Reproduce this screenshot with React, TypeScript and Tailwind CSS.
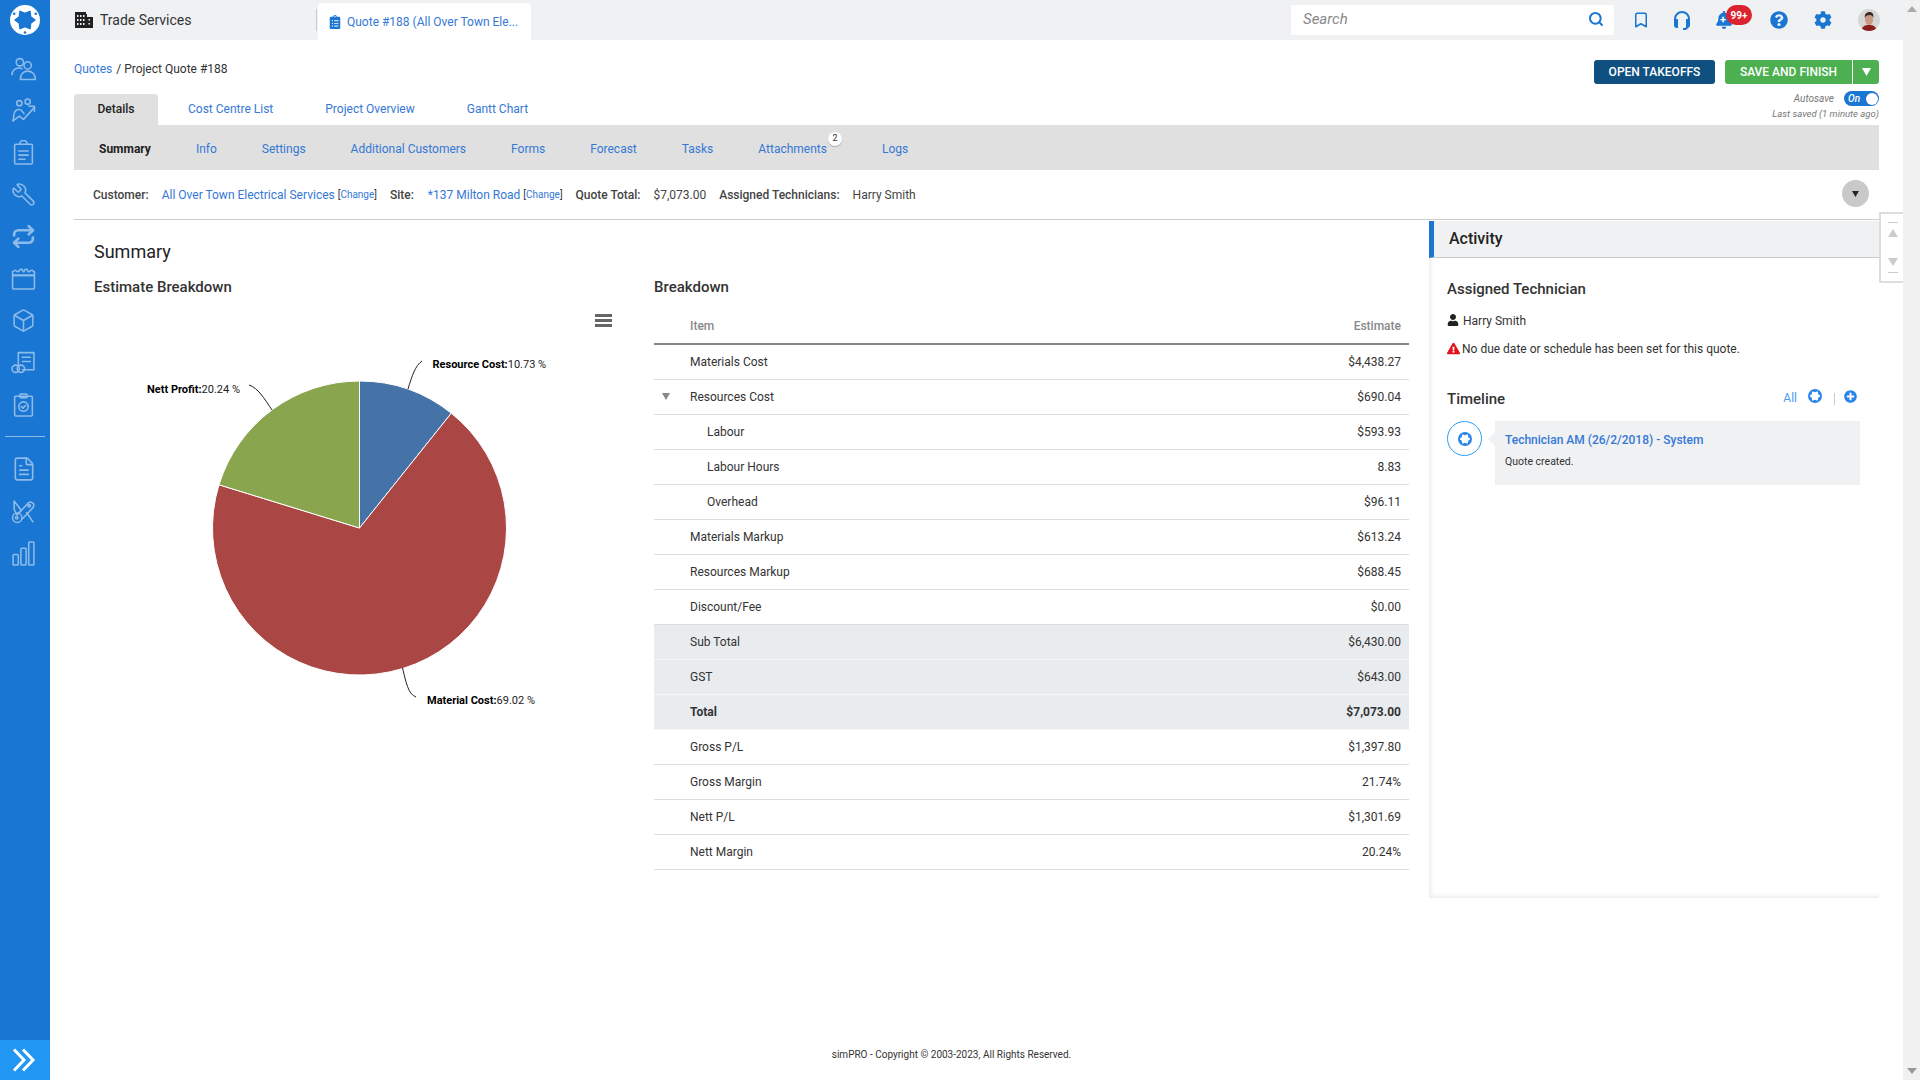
import { Bookmark, Box, FileText, Repeat, Search, Wrench } from 'lucide-react';
import { FaBell, FaClipboardList, FaCog, FaExclamationTriangle, FaPlusCircle, FaQuestionCircle, FaUser } from 'react-icons/fa';

const iconStroke = '#8dbbea';
const starPoints = '20,6.340 20.630,11.750 25,15 20.630,18.250 20,23.660 15,21.500 10,23.660 9.370,18.250 5,15 9.370,11.750 10,6.340 15,8.500';

function SideSvg({ children }: { children: React.ReactNode }) {
  return (
    <svg width="25" height="25" viewBox="0 0 24 24" fill="none" stroke={iconStroke} strokeWidth="1.5" strokeLinecap="round" strokeLinejoin="round">
      {children}
    </svg>
  );
}

function Burst({ size, color }: { size: number; color: string }) {
  return (
    <svg width={size} height={size} viewBox="4 4 22 22">
      <polygon points={starPoints} fill={color} stroke={color} strokeWidth="3" strokeLinejoin="round" />
    </svg>
  );
}

function Logo() {
  return (
    <svg width="30" height="30" viewBox="0 0 30 30">
      <circle cx="15" cy="15" r="15" fill="#fff" />
      <polygon points={starPoints} fill="#1976d2" stroke="#1976d2" strokeWidth="1.500" strokeLinejoin="round" />
      <circle cx="25.800" cy="8.750" r="1.300" fill="#1976d2" />
      <circle cx="4.200" cy="8.750" r="1.300" fill="#1976d2" />
      <circle cx="15" cy="27.500" r="1.300" fill="#1976d2" />
    </svg>
  );
}

const sideIcons = [
  <SideSvg key="users"><circle cx="8.500" cy="6" r="3.500" /><circle cx="16" cy="9" r="3.500" /><path d="M1 18c0-4 3-6.500 6.500-6.500 1 0 2 .2 3 .6" /><path d="M9 22.500c0-5 3-8 7-8s7.500 3 7.500 8z" /></SideSvg>,
  <SideSvg key="leads"><circle cx="8" cy="5" r="2.500" /><circle cx="16" cy="3.500" r="2.500" /><path d="M2 22l1-7c.5-2 2-4 4.500-4 2 0 3 1 3.500 2l1.500 2" /><path d="M2 22l6-4.500 4 3L22.500 9" /><path d="M17 8h5.500v5" /></SideSvg>,
  <SideSvg key="quotes"><rect x="3.500" y="4" width="17" height="19" rx="1" /><path d="M8.500 4V3.500a3.500 3 0 0 1 7 0V4" /><path d="M7.500 10.500h9M7.500 14.500h9M7.500 18.500h6" /></SideSvg>,
  <Wrench key="wrench" size={25} color={iconStroke} strokeWidth={1.5} className="-scale-x-100" />,
  <Repeat key="repeat" size={25} color={iconStroke} strokeWidth={2.6} />,
  <SideSvg key="calendar"><path d="M1.500 9V5.500c1 0 1.500-1.500 2.500-1.500s1.500 1.500 2.500 1.500S8.500 3 10 3s1 2.500 2 2.500S13 3 14.500 3s1.500 2.500 2.500 2.500S18.500 4 20 4s1 1.500 2.500 1.500V9z" /><rect x="1.500" y="9" width="21" height="13" rx="1" /></SideSvg>,
  <Box key="box" size={25} color={iconStroke} strokeWidth={1.5} />,
  <SideSvg key="coins"><path d="M7 14V2.500h15V19H11" /><path d="M11 7h7.500M11 11h7.500" /><circle cx="4.500" cy="18" r="3.500" /><circle cx="9.500" cy="18" r="3.500" /></SideSvg>,
  <SideSvg key="check"><rect x="3.500" y="4" width="17" height="19" rx="1" /><rect x="8.500" y="2" width="7" height="3.500" rx="1" /><circle cx="12" cy="14" r="4.500" /><path d="M10 14l1.500 1.500 2.500-2.500" /></SideSvg>,
];

const sideIconsLower = [
  <FileText key="file" size={26} color={iconStroke} strokeWidth={1.5} />,
  <SideSvg key="tools"><path d="M3 2l7 9-4.500 4L3 10z" /><circle cx="6" cy="18" r="4.500" /><path d="M21.500 4.500c-1-1.500-3-2-4.500-1L6 15" /><path d="M21.500 4.500c.8 1.500.3 3-1 4.500L11 19" /><circle cx="17.500" cy="6.500" r="1.200" /><path d="M15 13l6 9" /><circle cx="5.500" cy="18" r="1.200" /></SideSvg>,
  <SideSvg key="bars"><rect x="2" y="13" width="5" height="10" rx=".8" /><rect x="9.500" y="7" width="5" height="16" rx=".8" /><rect x="17" y="1" width="5" height="22" rx=".8" /></SideSvg>,
];

const subTabs = ['Info', 'Settings', 'Additional Customers', 'Forms', 'Forecast', 'Tasks', 'Attachments', 'Logs'];

type Row = { item: string; value: string; indent?: boolean; toggle?: boolean; shade?: boolean; bold?: boolean };

const rows: Row[] = [
  { item: 'Materials Cost', value: '$4,438.27' },
  { item: 'Resources Cost', value: '$690.04', toggle: true },
  { item: 'Labour', value: '$593.93', indent: true },
  { item: 'Labour Hours', value: '8.83', indent: true },
  { item: 'Overhead', value: '$96.11', indent: true },
  { item: 'Materials Markup', value: '$613.24' },
  { item: 'Resources Markup', value: '$688.45' },
  { item: 'Discount/Fee', value: '$0.00' },
  { item: 'Sub Total', value: '$6,430.00', shade: true },
  { item: 'GST', value: '$643.00', shade: true },
  { item: 'Total', value: '$7,073.00', shade: true, bold: true },
  { item: 'Gross P/L', value: '$1,397.80' },
  { item: 'Gross Margin', value: '21.74%' },
  { item: 'Nett P/L', value: '$1,301.69' },
  { item: 'Nett Margin', value: '20.24%' },
];

function Sidebar() {
  return (
    <aside className="flex h-[1080px] w-[50px] shrink-0 flex-col items-center bg-[#1976d2]">
      <div className="mt-[5px]"><Logo /></div>
      <div className="mt-[21px] flex flex-col items-center gap-[17px] pr-[3px]">{sideIcons}</div>
      <div className="mt-[19px] h-px w-[40px] bg-[#8dbbea]" />
      <div className="mt-[19px] flex flex-col items-center gap-[17px] pr-[3px]">{sideIconsLower}</div>
      <div className="mt-auto flex h-[40px] w-full items-center justify-center bg-[#2196f3]">
        <svg width="24" height="24" viewBox="0 0 24 24" fill="none" stroke="#fff" strokeWidth="3" className="mr-[2px]">
          <path d="M2 1.500L12 12 2 22.500M11 1.500L21 12 11 22.500" />
        </svg>
      </div>
    </aside>
  );
}

function TopBar() {
  return (
    <header className="flex h-[40px] items-center bg-[#f0f1f3]">
      <div className="flex h-full w-[268px] shrink-0 items-center pl-[25px]">
        <svg width="18" height="16" viewBox="0 0 18 16" fill="#222">
          <path d="M0 0h11v2h1v14H0z" />
          <path d="M12 5h6v11h-6z" />
          <path d="M2 3h1.500v2H2zM5 3h1.500v2H5zM8 3h1.500v2H8zM2 7h1.500v2H2zM5 7h1.500v2H5zM8 7h1.500v2H8zM2 11h1.500v2H2zM5 11h1.500v2H5zM8 11h1.500v2H8zM13.500 7H15v1.500h-1.500zM13.500 11H15v1.500h-1.500z" fill="#f0f1f3" />
        </svg>
        <span className="ml-[7px] text-[14px] text-[#333]">Trade Services</span>
        <span className="ml-auto mr-[1px] h-[22px] w-px bg-[#ccc]" />
      </div>
      <div className="flex h-[37px] w-[213px] shrink-0 items-center self-end rounded-t-[3px] bg-white pl-[10px]">
        <FaClipboardList size={14} color="#1976d2" />
        <span className="ml-[5px] text-[12px] text-[#3578d6]">Quote #188 (All Over Town Ele...</span>
      </div>
      <div className="ml-auto flex h-[30px] w-[323px] shrink-0 items-center justify-between rounded-[2px] bg-white pl-[12px] pr-[10px]">
        <span className="mb-[1px] text-[15px] italic text-[#888]">Search</span>
        <Search size={16} color="#1976d2" strokeWidth={3} className="mb-[2px]" />
      </div>
      <div className="flex w-[289px] shrink-0 items-center">
        <Bookmark size={18} color="#1976d2" strokeWidth={2} className="ml-[18px]" />
        <svg width="18" height="20" viewBox="0 0 18 20" fill="none" stroke="#1976d2" strokeWidth="2" className="ml-[23px]">
          <path d="M2 13V9a7 7 0 0 1 14 0v4" />
          <path d="M2 10v5c0 1 .5 2 2 2V10zM16 10v5c0 1-.5 2-2 2V10z" fill="#1976d2" />
          <path d="M14 17c0 1.500-1 2-2.500 2H10" />
        </svg>
        <div className="relative ml-[24px] h-[18px] w-[18px]">
          <FaBell size={18} color="#1976d2" />
          <span className="absolute left-[5px] top-[4px] text-[11px] font-bold leading-[10px] text-white">+</span>
          <span className="absolute -top-[6px] left-[11px] flex h-[20px] w-[26px] items-center justify-center rounded-full bg-[#d9232e] text-[10px] font-bold text-white">99+</span>
        </div>
        <FaQuestionCircle size={18} color="#1976d2" className="ml-[37px]" />
        <FaCog size={18} color="#1976d2" className="ml-[26px]" />
        <svg width="22" height="22" viewBox="0 0 22 22" className="ml-[26px] rounded-full">
          <rect width="22" height="22" fill="#d6d6d6" />
          <path d="M3 22c1-5 4-6 8-6s7 1 8 6z" fill="#8c1f1c" />
          <ellipse cx="11" cy="10.500" rx="4" ry="5.500" fill="#c99a82" />
          <path d="M6.800 9c-.5-4 2-6 4.700-6s4.500 2 3.700 6c-.5-2-1.500-3-3.700-3S7.500 7 6.800 9z" fill="#3a2a22" />
        </svg>
      </div>
    </header>
  );
}

function ActionsRow() {
  return (
    <div className="flex justify-between">
      <div className="pt-[21px]">
        <div className="flex h-[16px] items-center text-[12px] text-[#333]">
          <span className="text-[#3578d6]">Quotes</span>
          <span className="ml-[4px]">/ Project Quote #188</span>
        </div>
        <div className="mt-[17px] flex h-[31px] items-center text-[12px] text-[#3578d6]">
          <div className="flex h-full w-[84px] items-center justify-center rounded-t-[3px] bg-[#e0e0e0] pb-[1px] font-medium text-[#222]">Details</div>
          <span className="ml-[30px] pb-[1px]">Cost Centre List</span>
          <span className="ml-[52px] pb-[1px]">Project Overview</span>
          <span className="ml-[52px] pb-[1px]">Gantt Chart</span>
        </div>
      </div>
      <div className="flex flex-col items-end pt-[20px]">
        <div className="flex h-[24px] text-[12px] font-medium text-white">
          <div className="flex w-[121px] items-center justify-center rounded-[3px] bg-[#0f5080]">OPEN TAKEOFFS</div>
          <div className="ml-[10px] flex w-[127px] items-center justify-center rounded-l-[3px] bg-[#4caf50]">SAVE AND FINISH</div>
          <div className="ml-px flex w-[26px] items-center justify-center rounded-r-[3px] bg-[#4caf50]">
            <svg width="9" height="8" viewBox="0 0 9 8" fill="#fff"><path d="M0 0h9L4.500 8z" /></svg>
          </div>
        </div>
        <div className="mt-[7px] flex h-[15px] items-center">
          <span className="text-[10px] italic text-[#777]">Autosave</span>
          <div className="ml-[10px] flex h-[15px] w-[35px] items-center justify-between rounded-full bg-[#1976d2] pl-[4px] pr-[1px]">
            <span className="text-[10px] font-medium italic text-white">On</span>
            <span className="h-[12px] w-[12px] rounded-full bg-white" />
          </div>
        </div>
        <span className="mt-[2px] text-[9.500px] leading-[12px] italic text-[#777]">Last saved (1 minute ago)</span>
      </div>
    </div>
  );
}

function SubTabs() {
  return (
    <div className="flex h-[45px] items-center gap-[45px] bg-[#e0e0e0] pl-[25px] pt-[3px] text-[12px] text-[#3578d6]">
      <span className="font-bold text-[#222]">Summary</span>
      {subTabs.map((tab) => (
        <span key={tab} className={`relative ${tab === 'Logs' ? 'ml-[10px]' : ''}`}>
          {tab}
          {tab === 'Attachments' && (
            <span className="absolute -right-[15px] -top-[8px] flex h-[14px] w-[14px] items-center justify-center rounded-full bg-white text-[9px] text-[#333] shadow-[0_1px_1px_rgba(0,0,0,0.25)]">2</span>
          )}
        </span>
      ))}
    </div>
  );
}

function CustomerRow() {
  const change = <span className="ml-[3px] text-[10px] text-[#333]">[<span className="text-[#3578d6]">Change</span>]</span>;
  return (
    <div className="flex h-[50px] items-center border-b border-[#ccc] pl-[19px] pr-[10px] text-[12px] text-[#444]">
      <span className="font-medium">Customer:</span>
      <span className="ml-[13px] text-[#3578d6]">All Over Town Electrical Services</span>
      {change}
      <span className="ml-[13px] font-medium">Site:</span>
      <span className="ml-[14px] text-[#3578d6]">*137 Milton Road</span>
      {change}
      <span className="ml-[13px] font-medium">Quote Total:</span>
      <span className="ml-[13px]">$7,073.00</span>
      <span className="ml-[13px] font-medium">Assigned Technicians:</span>
      <span className="ml-[13px]">Harry Smith</span>
      <div className="mb-[2px] ml-auto flex h-[27px] w-[27px] items-center justify-center rounded-full bg-[#c9c9c9]">
        <svg width="7" height="6" viewBox="0 0 8 7" fill="#222"><path d="M0 0h8L4 7z" /></svg>
      </div>
    </div>
  );
}

function PieChart() {
  return (
    <svg width="560" height="420" viewBox="0 0 560 420" className="mt-[3px] block">
      <path d="M265.500 228V81A147 147 0 0 1 357.300 113.200z" fill="#4572a7" stroke="#fff" strokeWidth="1" />
      <path d="M265.500 228L357.300 113.200A147 147 0 1 1 125 184.800z" fill="#aa4643" stroke="#fff" strokeWidth="1" />
      <path d="M265.500 228L125 184.800A147 147 0 0 1 265.500 81z" fill="#89a54e" stroke="#fff" strokeWidth="1" />
      <path d="M314 89C318 76 321 66 328 61M178 110C170 98 164 88 155 85M308.500 368C312 382 314 394 322 397" fill="none" stroke="#222" strokeWidth="1" />
      <path d="M501 14h17v3h-17zM501 19h17v3h-17zM501 24h17v3h-17z" fill="#666" />
      <g fontSize="11" fill="#222">
        <text x="338.500" y="68"><tspan fontWeight="700" fill="#000">Resource Cost:</tspan>10.73 %</text>
        <text x="53" y="93"><tspan fontWeight="700" fill="#000">Nett Profit:</tspan>20.24 %</text>
        <text x="333" y="404"><tspan fontWeight="700" fill="#000">Material Cost:</tspan>69.02 %</text>
      </g>
    </svg>
  );
}

function BreakdownTable() {
  return (
    <div className="w-[755px]">
      <h3 className="mt-[20px] text-[15px] leading-[20px] font-medium text-[#333]">Breakdown</h3>
      <div className="mt-[12px] flex h-[36px] items-center justify-between border-b-2 border-[#888] pb-[1px] pl-[36px] pr-[8px] text-[12px] font-medium text-[#888]">
        <span>Item</span>
        <span>Estimate</span>
      </div>
      {rows.map((row) => (
        <div
          key={row.item}
          className={`flex h-[35px] items-center justify-between border-b pr-[8px] text-[12px] text-[#333] ${row.indent ? 'pl-[53px]' : 'pl-[36px]'} ${row.shade ? 'border-[#f5f6f7] bg-[#e9ecef]' : 'border-[#ddd]'} ${row.bold ? 'font-bold' : ''}`}
        >
          <span className="relative">
            {row.toggle && (
              <svg width="8" height="7" viewBox="0 0 8 7" fill="#888" className="absolute -left-[28px] top-[5px]"><path d="M0 0h8L4 7z" /></svg>
            )}
            {row.item}
          </span>
          <span>{row.value}</span>
        </div>
      ))}
    </div>
  );
}

function ActivityPanel() {
  return (
    <section className="relative mt-px h-[677px] w-[450px] shrink-0 shadow-[inset_5px_-5px_4px_-3px_rgba(0,0,0,0.08)]">
      <div className="flex h-[37px] items-center border-b border-l-[5px] border-b-[#ccc] border-l-[#1976d2] bg-[#f0f1f3] pl-[15px] text-[16px] font-medium text-[#222]">Activity</div>
      <div className="absolute -right-[24px] -top-[9px] flex h-[71px] w-[24px] flex-col items-center justify-between border-y-2 border-l-2 border-[#ddd] bg-white py-[8px] pl-[2px]">
        <svg width="10" height="22" viewBox="0 0 10 22" fill="#ccc"><path d="M0 0h14v1H0zM5 7l5 8H0z" /></svg>
        <svg width="10" height="22" viewBox="0 0 10 22" fill="#ccc"><path d="M0 7h10l-5 8zM0 21h14v1H0z" /></svg>
      </div>
      <div className="pl-[18px] pr-[18px]">
        <h4 className="mt-[21px] text-[15px] leading-[20px] font-medium text-[#333]">Assigned Technician</h4>
        <div className="mt-[12px] flex h-[20px] items-center text-[12px] text-[#333]">
          <FaUser size={12} color="#222" className="mb-[3px]" />
          <span className="ml-[4px]">Harry Smith</span>
        </div>
        <div className="mt-[8px] flex h-[20px] items-center text-[12px] text-[#333]">
          <FaExclamationTriangle size={13} color="#e3131b" className="mb-[2px]" />
          <span className="ml-[2px]">No due date or schedule has been set for this quote.</span>
        </div>
        <div className="mt-[30px] flex h-[20px] items-center pr-[4px]">
          <h4 className="text-[15px] font-medium text-[#333]">Timeline</h4>
          <span className="mb-[2px] ml-auto text-[12px] text-[#4a9cf0]">All</span>
          <span className="mb-[6px] ml-[11px] flex h-[14px] w-[14px] items-center justify-center rounded-full bg-[#2a86e8]"><Burst size={10} color="#fff" /></span>
          <span className="ml-[12px] h-[12px] w-px bg-[#ccc]" />
          <FaPlusCircle size={13} color="#2a86e8" className="mb-[6px] ml-[9px]" />
        </div>
        <div className="mt-[12px] flex">
          <div className="flex h-[35px] w-[35px] items-center justify-center rounded-full border border-[#2a9df4]">
            <span className="flex h-[14px] w-[14px] items-center justify-center rounded-full bg-[#2a86e8]"><Burst size={10} color="#fff" /></span>
          </div>
          <div className="relative ml-[13px] h-[64px] w-[365px] bg-[#f0f1f3] px-[10px] pt-[10px]">
            <span className="absolute -left-[7px] top-[11px] h-0 w-0 border-y-[7px] border-r-[7px] border-y-transparent border-r-[#f0f1f3]" />
            <div className="text-[12px] leading-[18px] font-medium text-[#3578d6]">Technician AM (26/2/2018) - System</div>
            <div className="mt-[6px] text-[10.500px] leading-[14px] text-[#333]">Quote created.</div>
          </div>
        </div>
      </div>
    </section>
  );
}

export default function App() {
  return (
    <div className="flex h-[1080px] w-[1920px] overflow-hidden bg-white [font-family:Roboto,sans-serif]">
      <Sidebar />
      <main className="flex w-[1853px] shrink-0 flex-col">
        <TopBar />
        <div className="px-[24px]">
          <ActionsRow />
          <SubTabs />
          <CustomerRow />
          <div className="flex">
            <div className="flex flex-1">
              <div className="w-[580px] pl-[20px]">
                <h2 className="mt-[21px] text-[18px] leading-[22px] text-[#222]">Summary</h2>
                <h3 className="mt-[14px] text-[15px] leading-[20px] font-medium text-[#333]">Estimate Breakdown</h3>
                <PieChart />
              </div>
              <div className="mt-[37px]">
                <BreakdownTable />
              </div>
            </div>
            <ActivityPanel />
          </div>
        </div>
        <footer className="mt-auto h-[33px] pr-[50px] text-center text-[10px] text-[#333]">simPRO - Copyright © 2003-2023, All Rights Reserved.</footer>
      </main>
      <div className="flex h-[1080px] w-[17px] shrink-0 flex-col items-center justify-between bg-[#f1f1f1] py-[6px] text-[#999]">
        <svg width="10" height="6" viewBox="0 0 10 6" fill="#aaa"><path d="M5 0l5 6H0z" /></svg>
        <svg width="10" height="6" viewBox="0 0 10 6" fill="#999"><path d="M0 0h10L5 6z" /></svg>
      </div>
    </div>
  );
}
